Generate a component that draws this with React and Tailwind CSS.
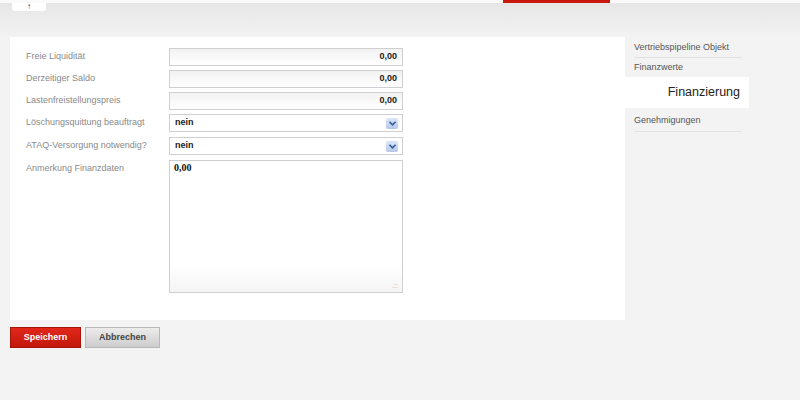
const fields = [
	{ label: "Freie Liquidität", value: "0,00" },
	{ label: "Derzeitiger Saldo", value: "0,00" },
	{ label: "Lastenfreistellungspreis", value: "0,00" },
];

const selects = [
	{ label: "Löschungsquittung beauftragt", value: "nein" },
	{ label: "ATAQ-Versorgung notwendig?", value: "nein" },
];

const Chevron = () => (
	<span className="flex items-center justify-center w-[12px] h-[11px] rounded-[2px] bg-gradient-to-b from-[#dbe6f7] to-[#b6c9ea]">
		<svg width="7" height="5" viewBox="0 0 7 5">
			<path d="M0.5 0.8 L3.5 3.8 L6.5 0.8" fill="none" stroke="#3a5e9c" strokeWidth="1.6" />
		</svg>
	</span>
);

const App = () => {
	return (
		<div className="w-[800px] h-[400px] bg-[#f3f3f3] font-['Liberation_Sans',Arial,sans-serif] overflow-hidden">
			{/* top strip */}
			<div className="h-[37px] bg-gradient-to-b from-[#e6e6e6] to-[#f3f3f3] border-t-[3px] border-[#fafafa]">
				<div className="flex h-[8px]">
					<div className="ml-[12px] w-[34px] h-[8px] bg-white rounded-b-[3px] flex justify-center">
						<span className="text-[8px] leading-[8px] text-[#333]">↑</span>
					</div>
					<div className="ml-[457px] w-[107px] h-[3px] -mt-[3px] bg-[#c8170c]" />
				</div>
			</div>

			<div className="flex">
				{/* form panel */}
				<div className="ml-[10px] w-[615px]">
					<div className="h-[283px] bg-white pl-[16px] pt-[11px]">
						{fields.map((f) => (
							<div key={f.label} className="flex items-center h-[18px] mb-[4px]">
								<span className="w-[143px] text-[9px] text-[#8a8a8a]">{f.label}</span>
								<div className="w-[234px] h-[18px] border border-[#cfcfcf] bg-gradient-to-b from-[#f2f2f2] to-white flex items-center justify-end pr-[5px]">
									<span className="text-[9px] font-bold text-[#222]">{f.value}</span>
								</div>
							</div>
						))}
						{selects.map((f) => (
							<div key={f.label} className="flex items-center h-[18px] mb-[5px]">
								<span className="w-[143px] text-[9px] text-[#8a8a8a]">{f.label}</span>
								<div className="w-[234px] h-[18px] border border-[#cfcfcf] bg-white flex items-center justify-between pl-[5px] pr-[4px]">
									<span className="text-[9px] font-bold text-[#222]">{f.value}</span>
									<Chevron />
								</div>
							</div>
						))}
						<div className="flex">
							<span className="w-[143px] text-[9px] leading-[12px] text-[#8a8a8a] pt-[2px]">Anmerkung Finanzdaten</span>
							<div className="relative w-[234px] h-[133px] border border-[#cfcfcf] bg-gradient-to-b from-white from-80% to-[#f4f4f4] px-[4px] pt-[1px]">
								<p className="text-[10px] leading-[12px] font-bold text-[#111] font-['Liberation_Serif',serif]">0,00</p>
								<span className="absolute right-[4px] bottom-[3px] text-[7px] leading-[7px] text-[#aaa]">.::</span>
							</div>
						</div>
					</div>
					<div className="flex gap-[4px] mt-[7px]">
						<button className="w-[71px] h-[21px] bg-gradient-to-b from-[#e0271a] to-[#c3170c] border border-[#a81308] text-white text-[9px] font-bold">
							Speichern
						</button>
						<button className="w-[75px] h-[21px] bg-gradient-to-b from-[#ececec] to-[#cdcdcd] border border-[#b8b8b8] text-[#444] text-[9px] font-bold">
							Abbrechen
						</button>
					</div>
				</div>

				{/* right nav */}
				<div className="w-[124px] pt-[1px]">
					<div className="ml-[9px] w-[108px] h-[20px] border-b border-[#e2e2e2] flex items-center">
						<span className="text-[9px] text-[#555]">Vertriebspipeline Objekt</span>
					</div>
					<div className="ml-[9px] w-[108px] h-[19px] flex items-center">
						<span className="text-[9px] text-[#555]">Finanzwerte</span>
					</div>
					<div className="h-[31px] bg-white flex items-center justify-end pr-[9px]">
						<span className="text-[12.5px] text-[#222]">Finanzierung</span>
					</div>
					<div className="ml-[9px] w-[108px] h-[24px] border-b border-[#e2e2e2] flex items-end pb-[4px]">
						<span className="text-[9px] text-[#555]">Genehmigungen</span>
					</div>
				</div>
			</div>
		</div>
	);
};

export default App;
